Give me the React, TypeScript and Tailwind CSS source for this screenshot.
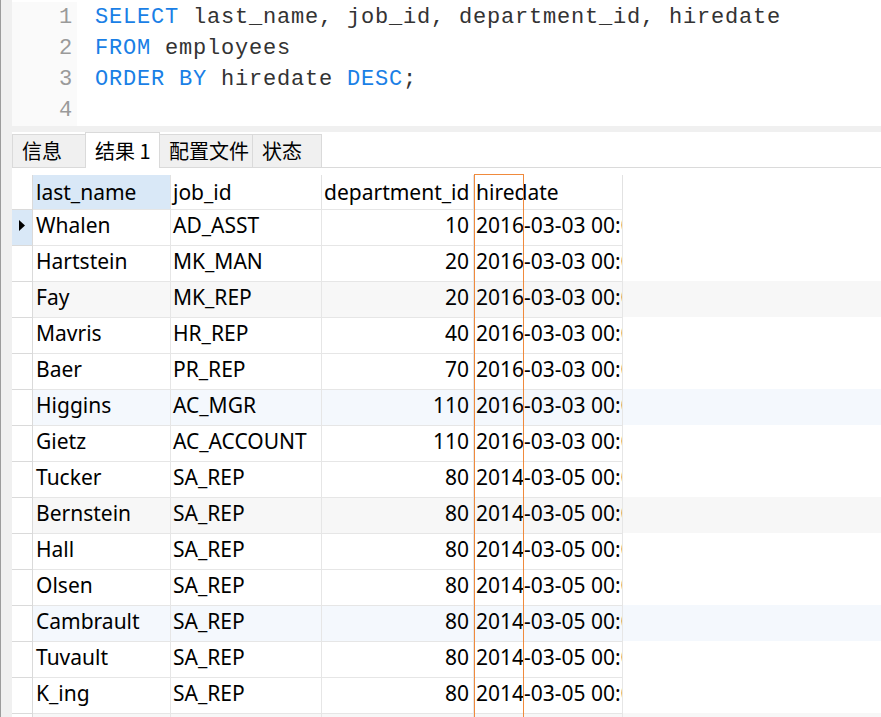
const rows: [string, string, number, string][] = [
  ['Whalen', 'AD_ASST', 10, '2016-03-03 00:00:00'],
  ['Hartstein', 'MK_MAN', 20, '2016-03-03 00:00:00'],
  ['Fay', 'MK_REP', 20, '2016-03-03 00:00:00'],
  ['Mavris', 'HR_REP', 40, '2016-03-03 00:00:00'],
  ['Baer', 'PR_REP', 70, '2016-03-03 00:00:00'],
  ['Higgins', 'AC_MGR', 110, '2016-03-03 00:00:00'],
  ['Gietz', 'AC_ACCOUNT', 110, '2016-03-03 00:00:00'],
  ['Tucker', 'SA_REP', 80, '2014-03-05 00:00:00'],
  ['Bernstein', 'SA_REP', 80, '2014-03-05 00:00:00'],
  ['Hall', 'SA_REP', 80, '2014-03-05 00:00:00'],
  ['Olsen', 'SA_REP', 80, '2014-03-05 00:00:00'],
  ['Cambrault', 'SA_REP', 80, '2014-03-05 00:00:00'],
  ['Tuvault', 'SA_REP', 80, '2014-03-05 00:00:00'],
  ['K_ing', 'SA_REP', 80, '2014-03-05 00:00:00'],
  ['', '', 0, ''],
];

const K = ({ children }: { children: React.ReactNode }) => <span className="text-[#1a7fe6]">{children}</span>;

// every third row gets a faint tint, alternating grey / blue
const rowBg = (i: number) => {
  if (i % 3 !== 2) return 'bg-white';
  return (i / 3) % 2 < 1 ? 'bg-[#f7f7f7]' : 'bg-[#f4f8fd]';
};

const Editor = () => (
  <div className="flex h-[126px] shrink-0 pt-[2px] font-['Liberation_Mono',monospace] text-[22px] leading-[31px] tracking-[0.8px]">
    <div className="w-[65px] bg-[#fafafa] pr-[4px] text-right text-[#9a9a9a]">
      {[1, 2, 3, 4].map((n) => (
        <div key={n}>{n}</div>
      ))}
    </div>
    <div className="flex-1 bg-white pl-[18px] text-[#333] whitespace-pre">
      <div>
        <K>SELECT</K> last_name, job_id, department_id, hiredate
      </div>
      <div>
        <K>FROM</K> employees
      </div>
      <div>
        <K>ORDER BY</K> hiredate <K>DESC</K>;
      </div>
      <div>&nbsp;</div>
    </div>
  </div>
);

const Tabs = () => {
  const tabs = ['信息', '结果 1', '配置文件', '状态'];
  const widths = ['w-[74px]', 'w-[75px]', 'w-[94px]', 'w-[70px]'];
  return (
    <div className="flex h-[36px] shrink-0 items-end border-b border-[#dadada] font-['Noto_Sans_CJK_SC',sans-serif] text-[20px] text-black">
      {tabs.map((t, i) => (
        <div
          key={t}
          className={`${widths[i]} flex items-center border border-b-0 border-[#dadada] pl-[9px] ${
            i === 1 ? 'h-[36px] -mb-px bg-white pl-[6px]' : 'h-[33px] bg-[#f0f0f0]'
          } ${i > 0 ? '-ml-px' : ''}`}
        >
          {t}
        </div>
      ))}
    </div>
  );
};

const Grid = () => (
  <div className="relative mt-[7px] shrink-0 font-['Noto_Sans',sans-serif] text-[21px] text-black">
    <div className="flex h-[34px] leading-[34px]">
      <div className="w-[21px] border-r border-[#dadada]" />
      <div className="w-[138px] border-r border-[#e2e2e2] bg-[#d9e8f7] pl-[3px]">last_name</div>
      <div className="w-[151px] border-r border-[#e2e2e2] pl-[2px]">job_id</div>
      <div className="w-[152px] border-r border-[#e2e2e2] pl-[2px]">department_id</div>
      <div className="w-[149px] border-r border-[#e2e2e2] pl-[2px]">hiredate</div>
    </div>
    {rows.map(([name, job, dept, date], i) => (
      <div key={i} className={`flex h-[36px] leading-[31px] ${rowBg(i)}`}>
        <div
          className={`flex w-[21px] items-center justify-center border-r border-t border-[#dadada] ${
            i === 0 ? 'bg-[#d9e8f7]' : 'bg-white'
          }`}
        >
          {i === 0 && (
            <svg width="6" height="11" viewBox="0 0 6 11" className="-mt-[4px]">
              <path d="M0 0 L6 5.5 L0 11 Z" fill="#000" />
            </svg>
          )}
        </div>
        <div className="w-[138px] overflow-hidden whitespace-nowrap border-r border-t border-[#e6e6e6] pl-[3px]">{name}</div>
        <div className="w-[151px] overflow-hidden whitespace-nowrap border-r border-t border-[#e6e6e6] pl-[2px]">{job}</div>
        <div className="w-[152px] overflow-hidden whitespace-nowrap border-r border-t border-[#e6e6e6] pr-[4px] text-right">
          {dept || ''}
        </div>
        <div className="w-[149px] overflow-hidden whitespace-nowrap border-r border-t border-[#e6e6e6] pl-[2px]">{date}</div>
      </div>
    ))}
    <div className="pointer-events-none absolute left-[462px] top-[-1px] h-[544px] w-[50px] border border-[#f08a3c]" />
  </div>
);

export default function App() {
  return (
    <div className="flex h-[717px] w-[881px] overflow-hidden bg-white">
      <div className="w-px bg-[#9c9c9c]" />
      <div className="w-[11px] bg-[#f0f0f0]" />
      <div className="flex flex-1 flex-col">
        <Editor />
        <div className="h-[6px] shrink-0 bg-[#f0f0f0]" />
        <Tabs />
        <Grid />
      </div>
    </div>
  );
}
